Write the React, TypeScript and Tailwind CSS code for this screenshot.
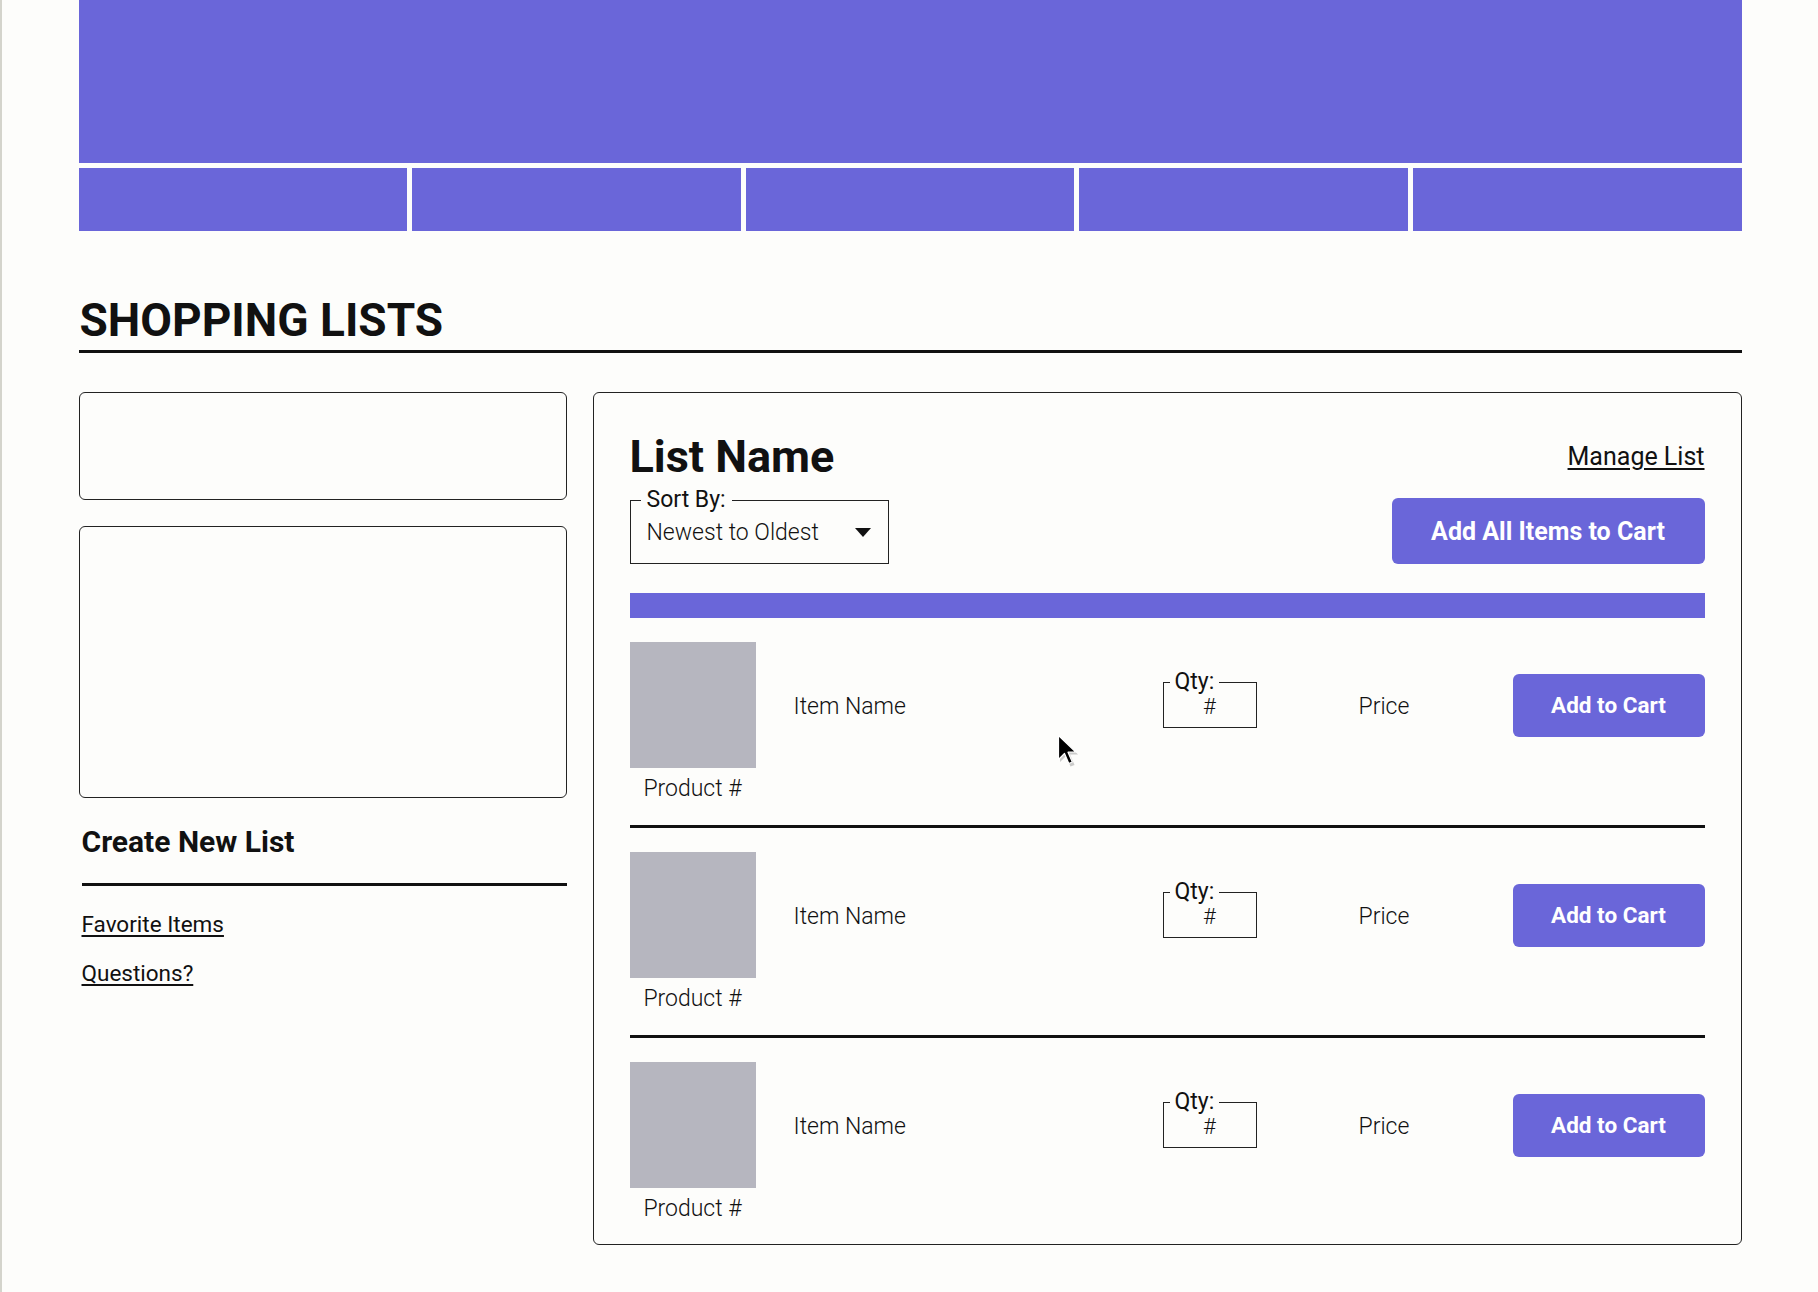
import React from "react";

const navItems = ["one", "two", "three", "four", "five"];
const items = [1, 2, 3];

const QtyBox: React.FC = () => (
  <div className="relative flex h-[46px] w-[94px] items-center justify-center border-[1.5px] border-[#222]">
    <span className="absolute -top-[14px] left-[6px] bg-[#fdfdfb] px-[5px] text-[23px] leading-[26px] text-[#111]">
      Qty:
    </span>
    <span className="pt-[3px] text-[22px] font-light leading-[26px] text-[#111]">#</span>
  </div>
);

const ItemRow: React.FC<{ last: boolean }> = ({ last }) => (
  <div
    className={
      last
        ? "flex items-start pt-[24px] pb-[22px]"
        : "flex items-start border-b-[3px] border-[#111] pt-[24px] pb-[23px]"
    }
  >
    <div className="flex w-[126px] flex-col items-center">
      <div className="h-[126px] w-[126px] bg-[#b6b6bf]" />
      <span className="mt-[7px] text-[23px] font-light leading-[27px] text-[#111]">Product #</span>
    </div>
    <div className="flex h-[126px] flex-1 items-center">
      <span className="ml-[38px] w-[369px] pt-[3px] text-[23px] font-light leading-[27px] text-[#111]">Item Name</span>
      <QtyBox />
      <span className="ml-[102px] pt-[3px] text-[23px] font-light leading-[27px] text-[#111]">Price</span>
      <button className="ml-auto h-[63px] w-[192px] rounded-[6px] bg-[#6a66d9] pt-[2px] text-[22.5px] font-bold text-white">
        Add to Cart
      </button>
    </div>
  </div>
);

export default function App() {
  return (
    <div className="relative min-h-screen border-l-2 border-[#d4d4cc] bg-[#fdfdfb] pb-[47px] font-['Roboto',sans-serif] text-[#111]">
      <div className="mx-auto w-[1663px]">
        {/* header */}
        <div className="h-[163px] bg-[#6a66d9]" />
        <nav className="mt-[5px] grid h-[63px] grid-cols-5 gap-[5px]">
          {navItems.map((n) => (
            <div key={n} className="bg-[#6a66d9]" />
          ))}
        </nav>

        <h1 className="mt-[61px] border-b-[3px] border-[#111] pb-[2px] pl-[1px] text-[46px] font-bold leading-[56px]">
          SHOPPING LISTS
        </h1>

        <div className="mt-[39px] flex items-start gap-[26px]">
          {/* left column */}
          <aside className="w-[488px] shrink-0">
            <div className="h-[108px] rounded-[6px] border-[1.5px] border-[#222]" />
            <div className="mt-[26px] h-[272px] rounded-[6px] border-[1.5px] border-[#222]" />
            <div className="ml-[3px]">
              <h2 className="mt-[26px] text-[30px] font-bold leading-[36px]">Create New List</h2>
              <div className="mt-[23px] h-[3px] bg-[#111]" />
              <a href="#" className="mt-[24px] block text-[22.5px] leading-[28px] underline underline-offset-[3px]">
                Favorite Items
              </a>
              <a href="#" className="mt-[21px] block text-[22.5px] leading-[28px] underline underline-offset-[3px]">
                Questions?
              </a>
            </div>
          </aside>

          {/* list panel */}
          <section className="flex-1 rounded-[6px] border-[1.5px] border-[#222] px-[36px] pt-[37px]">
            <div className="flex items-center justify-between">
              <h2 className="text-[45px] font-bold leading-[54px]">List Name</h2>
              <a href="#" className="text-[25px] leading-[28px] underline underline-offset-[3px]">
                Manage List
              </a>
            </div>
            <div className="mt-[14px] flex items-end justify-between">
              <div className="relative flex h-[64px] w-[259px] items-center border-[1.5px] border-[#222] pl-[16px] pr-[17px]">
                <span className="absolute -top-[14px] left-[10px] bg-[#fdfdfb] px-[6px] text-[23px] leading-[26px]">
                  Sort By:
                </span>
                <span className="pt-[2px] text-[23px] font-light leading-[26px]">Newest to Oldest</span>
                <svg className="ml-auto" width="16" height="9" viewBox="0 0 16 9">
                  <path d="M0 0 H16 L8 9 Z" fill="#111" />
                </svg>
              </div>
              <button className="h-[66px] w-[313px] rounded-[6px] bg-[#6a66d9] pt-[2px] text-[25px] font-bold text-white">
                Add All Items to Cart
              </button>
            </div>
            <div className="mt-[29px] h-[25px] bg-[#6a66d9]" />
            {items.map((i, idx) => (
              <ItemRow key={i} last={idx === items.length - 1} />
            ))}
          </section>
        </div>
      </div>

      {/* mouse pointer */}
      <svg className="absolute left-[1055px] top-[734px]" width="24" height="36" viewBox="0 0 24 36">
        <path d="M3 3 L3 28 L9 22 L13.5 32.5 L17.5 31 L13 20.5 L21 20.5 Z" fill="#999" opacity="0.5" />
        <path d="M1.5 1.5 L1.5 25.5 L7.5 19.5 L11.8 29.5 L15.3 28 L11 18.2 L19 18.2 Z" fill="#000" stroke="#fff" strokeWidth="1.2" strokeLinejoin="round" />
      </svg>
    </div>
  );
}
